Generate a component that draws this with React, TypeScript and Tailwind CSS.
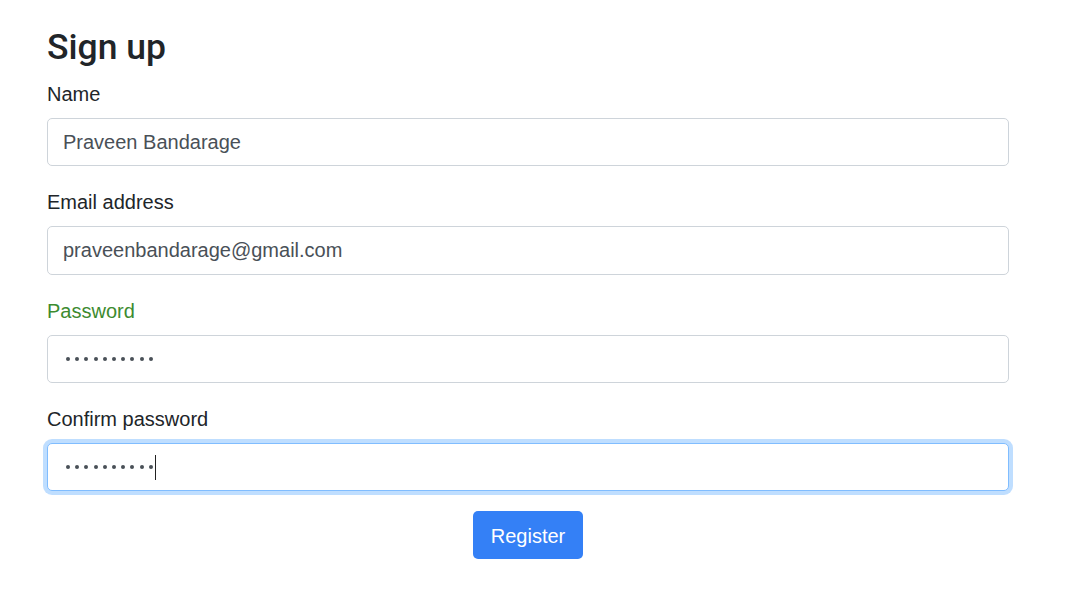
import React from "react";

const font = { fontFamily: '"Liberation Sans", Arial, sans-serif' };

function Dots({ caret }: { caret?: boolean }) {
  return (
    <div className="flex items-center h-full pl-[18px]">
      <div className="flex items-center gap-[5.2px]">
        {Array.from({ length: 10 }).map((_, i) => (
          <span key={i} className="block w-[4px] h-[4px] rounded-full bg-[#495057]" />
        ))}
      </div>
      {caret && <span className="block ml-[2px] w-[1.5px] h-[25px] bg-[#222]" />}
    </div>
  );
}

function Field({
  label,
  labelClass,
  children,
  focused,
}: {
  label: string;
  labelClass?: string;
  children: React.ReactNode;
  focused?: boolean;
}) {
  return (
    <div className="mb-[20px]">
      <div className={`text-[20px] leading-[32px] mb-[8px] ${labelClass ?? "text-[#212529]"}`}>{label}</div>
      <div
        className={
          "h-[48.3px] rounded-[5px] bg-white border " +
          (focused
            ? "border-[#80bdff] shadow-[0_0_0_4px_rgba(0,123,255,0.25)]"
            : "border-[#ced4da]")
        }
      >
        {children}
      </div>
    </div>
  );
}

function TextVal({ v }: { v: string }) {
  return <div className="px-[15px] pt-[1px] text-[20px] leading-[45.3px] text-[#495057]">{v}</div>;
}

export default function App() {
  return (
    <div className="min-h-screen bg-white" style={font}>
      <div className="ml-[47px] w-[962px] pt-[26px]">
        <h3
          className="text-[35.5px] leading-[42px] font-medium text-[#212529] mb-[10px]"
          style={{ fontFamily: 'Roboto, "Liberation Sans", Arial, sans-serif' }}
        >
          Sign up
        </h3>
        <Field label="Name">
          <TextVal v="Praveen Bandarage" />
        </Field>
        <Field label="Email address">
          <TextVal v="praveenbandarage@gmail.com" />
        </Field>
        <Field label="Password" labelClass="text-[#3d8b2f]">
          <Dots />
        </Field>
        <Field label="Confirm password" focused>
          <Dots caret />
        </Field>
        <div className="flex justify-center">
          <button className="w-[110px] h-[48px] pt-[2px] rounded-[5px] bg-[#3480f6] text-white text-[20px] leading-[30px]">
            Register
          </button>
        </div>
      </div>
    </div>
  );
}
